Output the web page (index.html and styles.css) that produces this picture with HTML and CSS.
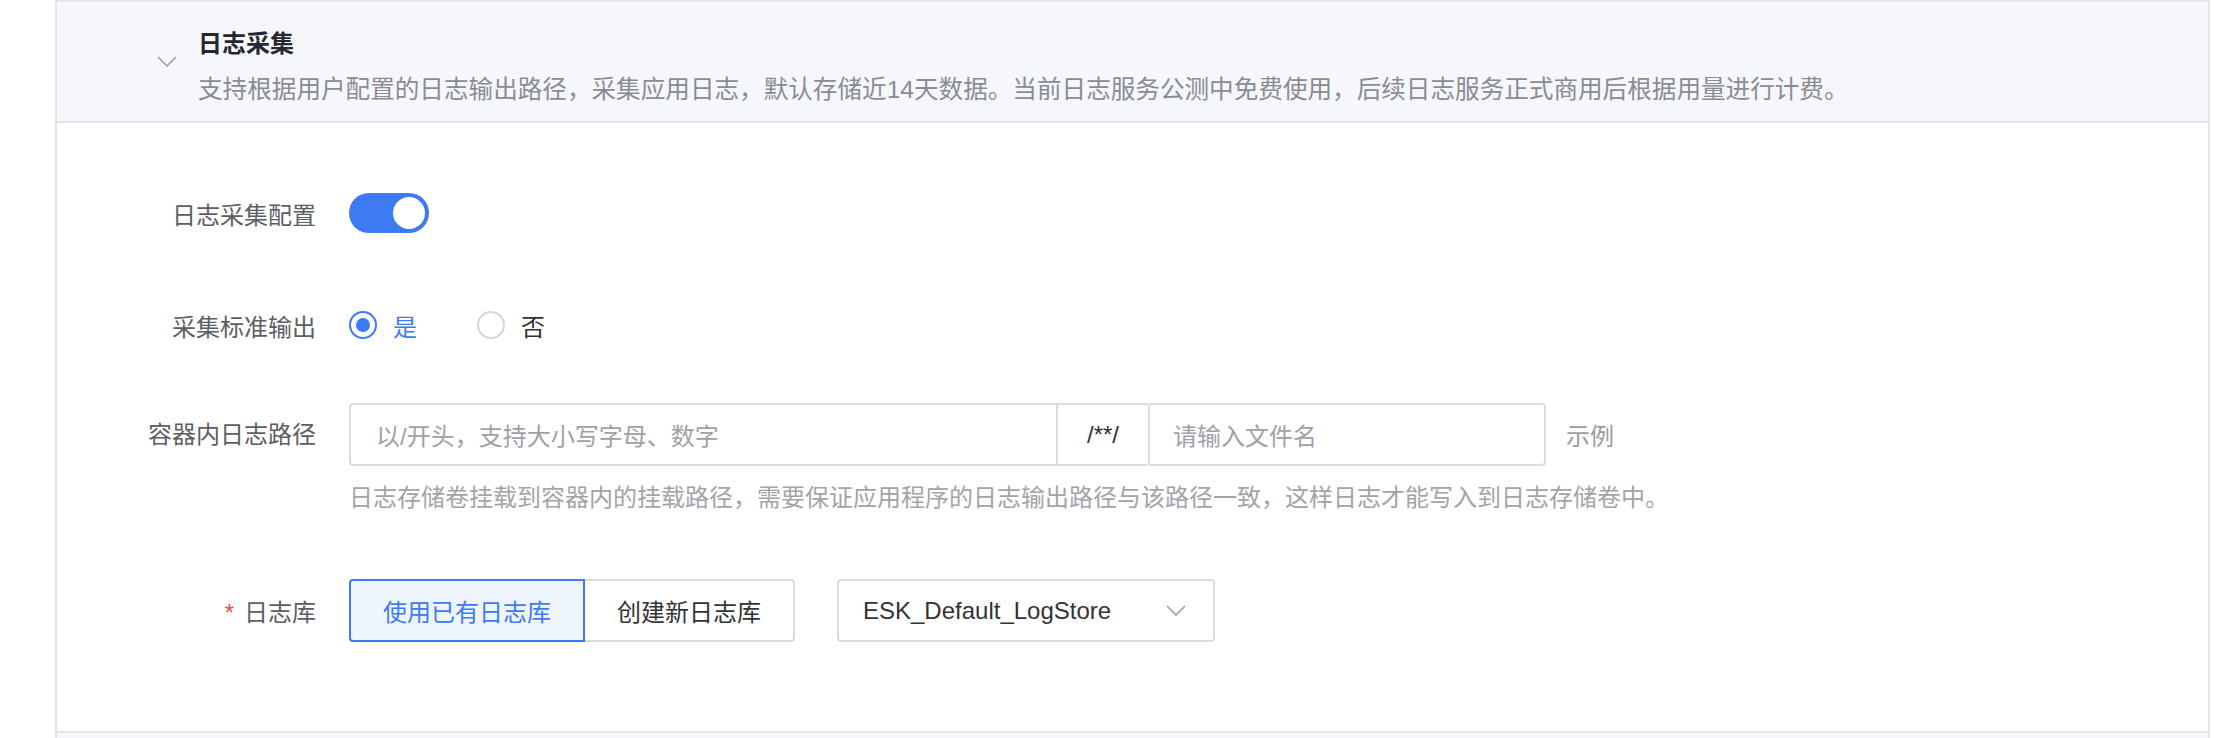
FILE: index.html
```html
<!DOCTYPE html>
<html lang="zh-CN">
<head>
    <meta charset="UTF-8">
    <title>日志采集</title>
    <link rel="stylesheet" href="styles.css">
</head>
<body>
    <div class="panel">
        <div class="panel-head">
            <svg class="chevron head-chevron" width="20" height="11" viewBox="0 0 20 11">
                <polyline points="1,1 10,10 19,1" fill="none" stroke="#9a9ca3" stroke-width="1.5"/>
            </svg>
            <div class="head-text">
                <div class="title">日志采集</div>
                <div class="desc">支持根据用户配置的日志输出路径，采集应用日志，默认存储近14天数据。当前日志服务公测中免费使用，后续日志服务正式商用后根据用量进行计费。</div>
            </div>
        </div>

        <div class="panel-body">
            <div class="form-row row-switch">
                <label class="form-label">日志采集配置</label>
                <div class="form-control">
                    <span class="switch on"><span class="knob"></span></span>
                </div>
            </div>

            <div class="form-row row-radio">
                <label class="form-label">采集标准输出</label>
                <div class="form-control radios">
                    <span class="radio checked"><span class="dot"></span></span>
                    <span class="radio-text checked">是</span>
                    <span class="radio"></span>
                    <span class="radio-text">否</span>
                </div>
            </div>

            <div class="form-row row-path">
                <label class="form-label">容器内日志路径</label>
                <div class="form-control column">
                    <div class="path-line">
                        <div class="input-group">
                            <div class="input input-main">以/开头，支持大小写字母、数字</div>
                            <div class="addon">/**/</div>
                            <div class="input input-file">请输入文件名</div>
                        </div>
                        <span class="example">示例</span>
                    </div>
                    <div class="help">日志存储卷挂载到容器内的挂载路径，需要保证应用程序的日志输出路径与该路径一致，这样日志才能写入到日志存储卷中。</div>
                </div>
            </div>

            <div class="form-row row-store">
                <label class="form-label"><span class="req">*</span>日志库</label>
                <div class="form-control">
                    <div class="btn-group">
                        <span class="btn active">使用已有日志库</span>
                        <span class="btn">创建新日志库</span>
                    </div>
                    <div class="select">
                        <span>ESK_Default_LogStore</span>
                        <svg class="chevron" width="20" height="11" viewBox="0 0 20 11">
                            <polyline points="1,1 10,10 19,1" fill="none" stroke="#9a9ca3" stroke-width="1.5"/>
                        </svg>
                    </div>
                </div>
            </div>
        </div>
    </div>
    <div class="panel-next"></div>
</body>
</html>
```

FILE: styles.css
```css
* {
    box-sizing: border-box;
}
body {
    margin: 0;
    font-family: "Liberation Sans", "Noto Sans CJK SC", sans-serif;
    font-size: 24px;
    color: #333;
    background-color: #fff;
}
.panel {
    margin-left: 55px;
    width: 2155px;
    border: 2px solid #e3e4ee;
}
.panel-head {
    display: flex;
    align-items: flex-start;
    height: 121px;
    padding: 26px 0 0 100px;
    background-color: #f6f7fa;
    border-bottom: 2px solid #e3e4ee;
}
.head-chevron {
    margin-top: 28px;
    margin-right: 21px;
    flex-shrink: 0;
}
.title {
    font-weight: bold;
    color: #252830;
    line-height: 32px;
}
.desc {
    margin-top: 14px;
    line-height: 32px;
    font-size: 24.6px;
    color: #898c94;
}
.panel-body {
    padding: 70px 0 89px 0;
}
.form-row {
    display: flex;
    align-items: center;
}
.form-label {
    width: 259px;
    margin-right: 33px;
    text-align: right;
    color: #5c5e63;
    flex-shrink: 0;
}
.form-control {
    display: flex;
    align-items: center;
}
.form-control.column {
    flex-direction: column;
    align-items: flex-start;
}
.row-switch {
    height: 40px;
}
.row-radio {
    height: 28px;
    margin-top: 78px;
}
.row-path {
    align-items: flex-start;
    margin-top: 64px;
}
.row-path .form-label {
    line-height: 63px;
}
.row-store {
    height: 63px;
    margin-top: 65px;
}

/* switch */
.switch {
    display: flex;
    align-items: center;
    justify-content: flex-end;
    width: 80px;
    height: 40px;
    padding: 0 4px;
    border-radius: 20px;
    background-color: #3d7bf4;
}
.knob {
    width: 32px;
    height: 32px;
    border-radius: 50%;
    background-color: #fff;
}

/* radio */
.radio {
    display: flex;
    align-items: center;
    justify-content: center;
    width: 28px;
    height: 28px;
    border: 2px solid #d6d6d6;
    border-radius: 50%;
}
.radio.checked {
    border-color: #3d7bf4;
}
.dot {
    width: 14px;
    height: 14px;
    border-radius: 50%;
    background-color: #3d7bf4;
}
.radio-text {
    margin-left: 16px;
    margin-right: 60px;
    color: #333;
}
.radio-text.checked {
    color: #3d7bf4;
}

/* path inputs */
.path-line {
    display: flex;
    align-items: center;
}
.input-group {
    display: flex;
    height: 63px;
}
.input {
    display: flex;
    align-items: center;
    border: 2px solid #dcdcdc;
    color: #9fa1a6;
}
.input-main {
    width: 709px;
    padding-left: 25px;
    border-radius: 4px 0 0 4px;
}
.addon {
    display: flex;
    align-items: center;
    justify-content: center;
    width: 90px;
    border-top: 2px solid #dcdcdc;
    border-bottom: 2px solid #dcdcdc;
    color: #333;
}
.input-file {
    width: 398px;
    padding-left: 23px;
    border-radius: 4px;
}
.example {
    margin-left: 20px;
    color: #9a9ca3;
}
.help {
    margin-top: 16px;
    line-height: 32px;
    color: #a2a4a8;
}

/* log store */
.req {
    color: #f5483b;
    margin-right: 10px;
}
.btn-group {
    display: flex;
    height: 63px;
}
.btn {
    display: flex;
    align-items: center;
    padding: 0 32px;
    border: 2px solid #dcdcdc;
    border-left: 0;
    border-radius: 0 4px 4px 0;
    color: #333;
}
.btn.active {
    border: 2px solid #3d7bf4;
    border-radius: 4px 0 0 4px;
    background-color: #eff5ff;
    color: #3d7bf4;
}
.select {
    display: flex;
    align-items: center;
    justify-content: space-between;
    width: 378px;
    height: 63px;
    margin-left: 42px;
    padding: 0 27px 0 24px;
    border: 2px solid #dcdcdc;
    border-radius: 4px;
    color: #333;
}
.panel-next {
    margin-left: 55px;
    width: 2155px;
    height: 20px;
    background-color: #f6f7fa;
    border-left: 2px solid #e3e4ee;
    border-right: 2px solid #e3e4ee;
}
```
